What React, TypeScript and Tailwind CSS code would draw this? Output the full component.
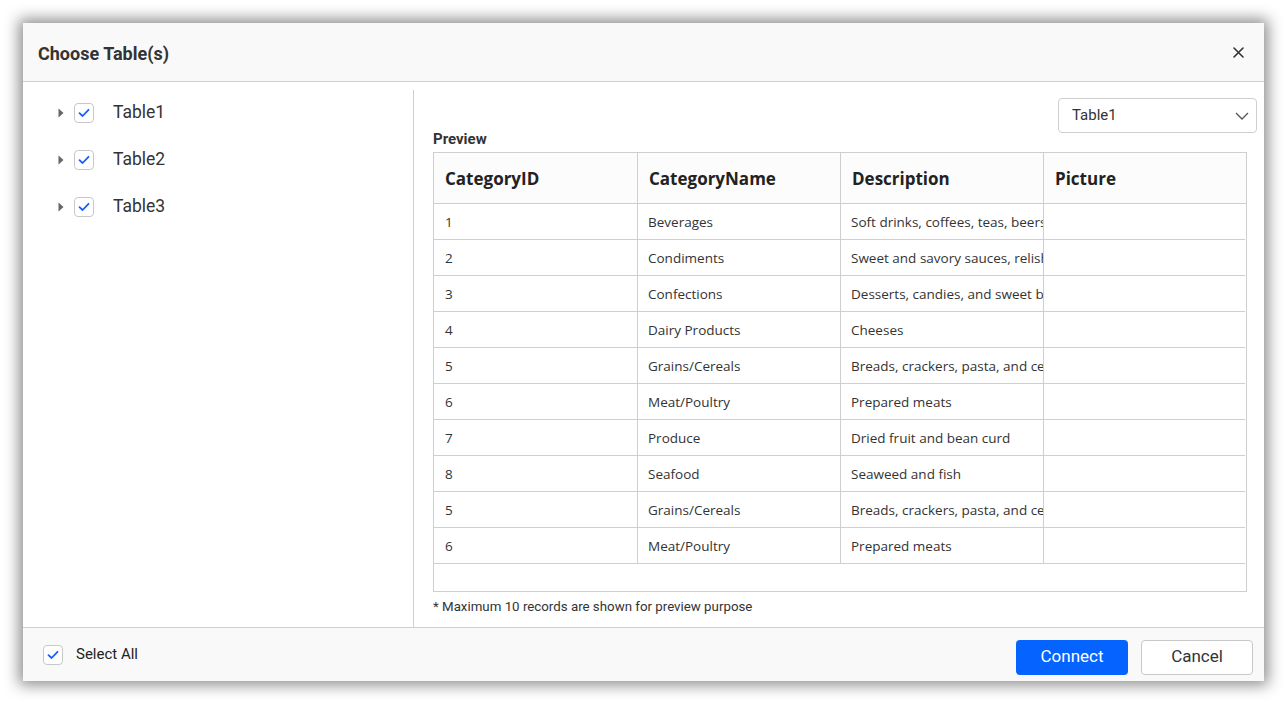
import React from "react";

const rows: [string, string, string][] = [
  ["1", "Beverages", "Soft drinks, coffees, teas, beers, and ales"],
  ["2", "Condiments", "Sweet and savory sauces, relishes, spreads, and seasonings"],
  ["3", "Confections", "Desserts, candies, and sweet breads"],
  ["4", "Dairy Products", "Cheeses"],
  ["5", "Grains/Cereals", "Breads, crackers, pasta, and cereal"],
  ["6", "Meat/Poultry", "Prepared meats"],
  ["7", "Produce", "Dried fruit and bean curd"],
  ["8", "Seafood", "Seaweed and fish"],
  ["5", "Grains/Cereals", "Breads, crackers, pasta, and cereal"],
  ["6", "Meat/Poultry", "Prepared meats"],
];

function Check() {
  return (
    <span className="flex h-[20px] w-[20px] items-center justify-center rounded-[4px] border border-[#c8c8c8] bg-white">
      <svg width="12" height="10" viewBox="0 0 12 10" fill="none">
        <path d="M1.5 5.2 L4.6 8 L10.5 1.8" stroke="#1a5cff" strokeWidth="1.8" strokeLinecap="round" strokeLinejoin="round" />
      </svg>
    </span>
  );
}

function TreeItem({ label }: { label: string }) {
  return (
    <div className="flex h-[47px] items-center">
      <span className="ml-[35px] flex w-[16px] items-center">
        <svg width="6" height="10" viewBox="0 0 6 10">
          <path d="M0.5 0.5 L5.5 5 L0.5 9.5 Z" fill="#666" />
        </svg>
      </span>
      <Check />
      <span className="ml-[19px] text-[17.5px] text-[#333]">{label}</span>
    </div>
  );
}

export default function App() {
  const font = { fontFamily: "Roboto, 'Liberation Sans', sans-serif" };
  return (
    <div className="h-[701px] w-[1284px] overflow-hidden bg-white pl-[23px] pt-[23px]" style={font}>
      <div className="flex h-[658px] w-[1241px] flex-col bg-white shadow-[0_0_14px_4px_rgba(0,0,0,0.45)]">
        {/* Header */}
        <div className="flex h-[59px] shrink-0 items-center justify-between border-b border-[#cfcfcf] bg-[#f9f9f9] pl-[15px] pr-[20px]">
          <span className="pt-[2px] text-[18px] font-bold text-[#333]">Choose Table(s)</span>
          <svg width="11" height="11" viewBox="0 0 11 11">
            <path d="M1 1 L10 10 M10 1 L1 10" stroke="#333" strokeWidth="1.6" strokeLinecap="round" />
          </svg>
        </div>
        {/* Body */}
        <div className="flex flex-1 pt-[8px]">
          <div className="-mt-[1px] w-[390px] shrink-0">
            <TreeItem label="Table1" />
            <TreeItem label="Table2" />
            <TreeItem label="Table3" />
          </div>
          <div className="flex flex-1 flex-col border-l border-[#cfcfcf] pl-[19px] pr-[17px]">
            <div className="-mr-[10px] flex justify-end pt-[8px]">
              <div className="flex h-[35px] w-[199px] items-center justify-between rounded-[4px] border border-[#cfcfcf] bg-white pl-[13px] pr-[7px]">
                <span className="text-[15px] text-[#333]">Table1</span>
                <svg width="14" height="8" viewBox="0 0 14 8">
                  <path d="M1 1 L7 7 L13 1" stroke="#555" strokeWidth="1.3" fill="none" />
                </svg>
              </div>
            </div>
            <div className="mt-[-3px] h-[18px] text-[15px] font-bold leading-[18px] text-[#333]">Preview</div>
            <div
              className="mt-[4px] h-[440px] w-[814px] border border-[#cfcfcf]"
              style={{ fontFamily: "'Open Sans', 'Noto Sans', sans-serif" }}
            >
              <div className="grid h-[51px] grid-cols-[204px_203px_203px_1fr] border-b border-[#cfcfcf] bg-[#fcfcfc]">
                {["CategoryID", "CategoryName", "Description", "Picture"].map((h, i) => (
                  <div
                    key={h}
                    className={`flex items-center pl-[11px] pt-[2px] text-[17px] font-bold text-[#222] ${i < 3 ? "border-r border-[#cfcfcf]" : ""}`}
                  >
                    {h}
                  </div>
                ))}
              </div>
              {rows.map((r, idx) => (
                <div key={idx} className="mr-[1px] grid h-[36px] grid-cols-[204px_203px_203px_1fr] border-b border-[#cfcfcf]">
                  <div className="flex items-center border-r border-[#cfcfcf] pl-[11px] pt-[2px] text-[13.5px] text-[#333]">{r[0]}</div>
                  <div className="flex items-center border-r border-[#cfcfcf] pl-[10px] pt-[2px] text-[13.5px] text-[#333]">{r[1]}</div>
                  <div className="flex items-center overflow-hidden whitespace-nowrap border-r border-[#cfcfcf] pl-[10px] pt-[2px] text-[13.5px] text-[#333]">{r[2]}</div>
                  <div />
                </div>
              ))}
            </div>
            <div className="mt-[5px] text-[13.3px] text-[#333]">* Maximum 10 records are shown for preview purpose</div>
          </div>
        </div>
        {/* Footer */}
        <div className="flex h-[54px] shrink-0 items-center justify-between border-t border-[#cfcfcf] bg-[#f9f9f9] pl-[20px] pr-[11px]">
          <div className="flex items-center">
            <Check />
            <span className="ml-[13px] text-[15px] text-[#222]">Select All</span>
          </div>
          <div className="flex items-center gap-[13px] pt-[5px]">
            <button className="h-[35px] w-[112px] rounded-[4px] bg-[#0563ff] text-[17px] text-white">Connect</button>
            <button className="h-[35px] w-[112px] rounded-[4px] border border-[#c8c8c8] bg-white text-[17px] text-[#333]">Cancel</button>
          </div>
        </div>
      </div>
    </div>
  );
}
